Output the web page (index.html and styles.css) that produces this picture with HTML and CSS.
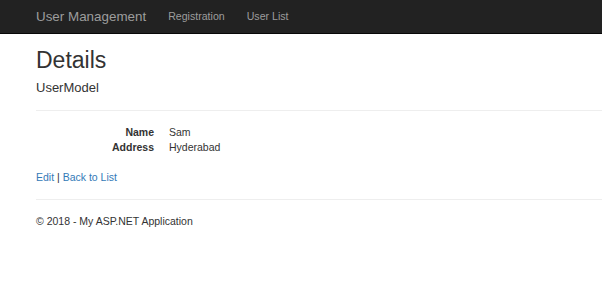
FILE: index.html
```html
<!DOCTYPE html>
<html lang="en">
<head>
    <meta charset="UTF-8">
    <meta name="viewport" content="width=device-width, initial-scale=1.0">
    <title>Details - My ASP.NET Application</title>
    <link rel="stylesheet" href="styles.css">
</head>
<body>

    <div class="navbar">
        <a href="#" class="navbar-brand">User Management</a>
        <ul class="nav">
            <li><a href="#">Registration</a></li>
            <li><a href="#">User List</a></li>
        </ul>
    </div>

    <!-- Main content area -->
    <div class="container body-content">
        <h2>Details</h2>

        <div>
            <h4>UserModel</h4>
            <hr />
            <dl class="dl-horizontal">
                <dt>Name</dt>
                <dd>Sam</dd>
                <dt>Address</dt>
                <dd>Hyderabad</dd>
            </dl>
        </div>
        <p class="actions">
            <a href="#">Edit</a> |
            <a href="#">Back to List</a>
        </p>

        <hr />
        <footer>
            <p>&copy; 2018 - My ASP.NET Application</p>
        </footer>
    </div>

</body>
</html>
```

FILE: styles.css
```css
body {
    margin: 0;
    font-family: "Liberation Sans", Arial, sans-serif;
    font-size: 10.5px;
    line-height: 1.42857;
    color: #333;
    background-color: #fff;
}

a {
    color: #337ab7;
    text-decoration: none;
}

/* Navbar */
.navbar {
    display: flex;
    align-items: center;
    height: 33px;
    padding: 0 36px;
    background-color: #222;
    border-bottom: 1px solid #080808;
}

.navbar-brand {
    color: #9d9d9d;
    font-size: 13.4px;
    margin-right: 22px;
}

.nav {
    display: flex;
    gap: 22px;
    list-style: none;
    margin: 0;
    padding: 0;
}

.nav a {
    color: #9d9d9d;
    font-size: 10.6px;
}

/* Main content */
.container {
    padding: 0 36px;
}

h2 {
    font-size: 23px;
    font-weight: 500;
    line-height: 1.1;
    margin: 14px 0 8px;
}

h4 {
    font-size: 13px;
    font-weight: 500;
    line-height: 1.1;
    margin: 0;
}

hr {
    border: 0;
    border-top: 1px solid #eee;
    margin: 14px -36px 14px 0;
}

.dl-horizontal {
    display: grid;
    grid-template-columns: 118px 1fr;
    column-gap: 15px;
    margin: 0 0 15px;
}

.dl-horizontal dt {
    font-weight: bold;
    text-align: right;
}

.dl-horizontal dd {
    margin: 0;
}

.actions {
    margin: 0 0 1px;
}

footer p {
    margin: 1px 0 0;
}
```
